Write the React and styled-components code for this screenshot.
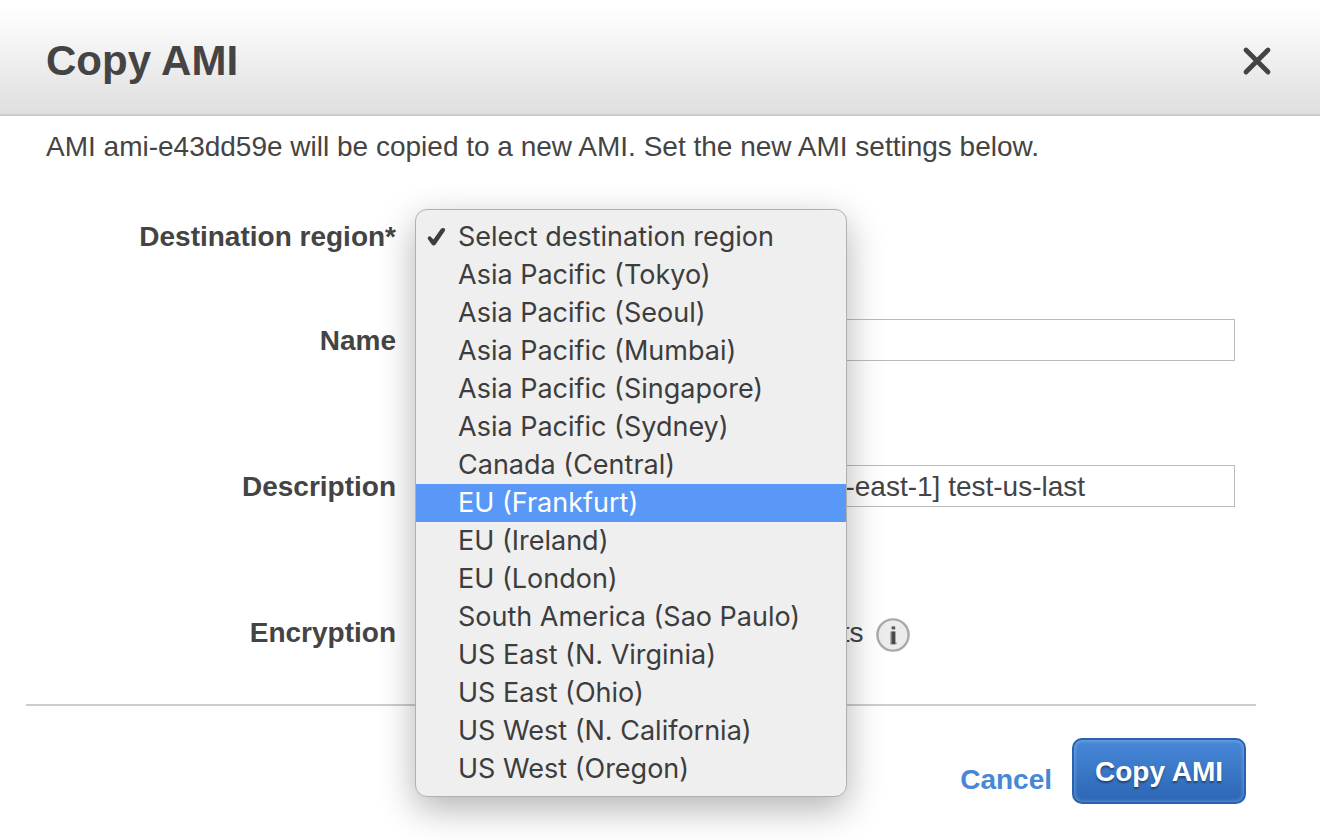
import React, { useState } from "react";
import styled, { createGlobalStyle } from "styled-components";

const GlobalStyle = createGlobalStyle`
  *, *::before, *::after { box-sizing: border-box; }
  body {
    margin: 0;
    background: #fff;
    color: #444;
    font: 28px/32px "Liberation Sans", Arial, sans-serif;
  }
`;

const Dialog = styled.main`
  min-height: 100vh;
`;

const Header = styled.header`
  display: flex;
  align-items: center;
  justify-content: space-between;
  height: 116px;
  padding: 8px 46px 0;
  border-bottom: 2px solid #ccc;
  background: linear-gradient(#fff, #fff 6%, #dfdfdf);
`;

const Title = styled.h1`
  margin: 0;
  font-size: 42px;
  line-height: 48px;
  font-weight: bold;
`;

const CloseButton = styled.button`
  display: flex;
  padding: 0;
  border: 0;
  background: none;
  color: #444;
  cursor: pointer;
`;

const Intro = styled.p`
  margin: 0;
  padding: 15px 46px 0;
`;

const Form = styled.form`
  padding-top: 52px;
`;

const Row = styled.div`
  display: flex;
  align-items: center;
  gap: 20px;
  height: 42px;
  margin-bottom: ${(p) => p.$space}px;
  padding: 0 85px 0 46px;
`;

const Label = styled.label`
  flex: none;
  width: 350px;
  padding-top: 2px;
  text-align: right;
  font-weight: bold;
`;

const Field = styled.div`
  position: relative;
  display: flex;
  flex: 1;
  align-items: center;
  min-width: 0;
`;

const RegionSelect = styled.select`
  width: 400px;
  height: 36px;
  font: inherit;
  color: inherit;
`;

const TextInput = styled.input`
  width: 100%;
  height: 42px;
  padding: 2px 44px 0;
  border: 1px solid #bbb;
  background: #fff;
  color: inherit;
  font: inherit;
`;

const CheckLabel = styled.label`
  display: flex;
  align-items: center;
  gap: 48px;
  margin-right: 12px;
  padding-top: 2px;
  white-space: nowrap;
`;

const CheckBox = styled.input`
  width: 26px;
  height: 26px;
  margin: 0;
`;

const InfoButton = styled.button`
  display: flex;
  padding: 6px 0 0;
  border: 0;
  background: none;
`;

const Menu = styled.ul`
  position: absolute;
  z-index: 1;
  top: -9px;
  left: -1px;
  width: 432px;
  margin: 0;
  padding: 8px 0;
  list-style: none;
  border: 1px solid #b0b0b0;
  border-radius: 12px;
  background: #efefef;
  box-shadow: 0 12px 36px rgba(0, 0, 0, 0.3);
  color: #3d3d3d;
  font-family: Inter, sans-serif;
  font-size: 27px;
`;

const Option = styled.li`
  display: flex;
  align-items: center;
  height: 38px;
  padding-left: 10px;
  white-space: nowrap;
  background: ${(p) => (p.$active ? "#5a98f8" : "transparent")};
  color: ${(p) => (p.$active ? "#fff" : "inherit")};
  cursor: default;
`;

const CheckSlot = styled.span`
  display: flex;
  flex: none;
  width: 32px;
`;

const Footer = styled.footer`
  display: flex;
  justify-content: flex-end;
  align-items: flex-end;
  gap: 20px;
  margin: 0 64px 0 26px;
  padding: 32px 10px 36px;
  border-top: 2px solid #ccc;
`;

const Cancel = styled.a`
  color: #4787d6;
  font-weight: bold;
  line-height: 48px;
  text-decoration: none;
`;

const Submit = styled.button`
  height: 66px;
  min-width: 174px;
  padding: 2px 20px 0;
  border: 2px solid #2763b0;
  border-radius: 10px;
  background: linear-gradient(#4888d8, #2c66b6);
  box-shadow: inset 0 0 4px rgba(255, 255, 255, 0.4);
  color: #fff;
  font: inherit;
  font-weight: bold;
  text-shadow: 0 2px 2px rgba(0, 0, 0, 0.4);
  cursor: pointer;
`;

const regions = [
  "Select destination region",
  "Asia Pacific (Tokyo)",
  "Asia Pacific (Seoul)",
  "Asia Pacific (Mumbai)",
  "Asia Pacific (Singapore)",
  "Asia Pacific (Sydney)",
  "Canada (Central)",
  "EU (Frankfurt)",
  "EU (Ireland)",
  "EU (London)",
  "South America (Sao Paulo)",
  "US East (N. Virginia)",
  "US East (Ohio)",
  "US West (N. California)",
  "US West (Oregon)",
];

const CloseIcon = () => (
  <svg width="34" height="34" viewBox="0 0 34 34" aria-hidden="true">
    <path d="M6 6 28 28M28 6 6 28" stroke="currentColor" strokeWidth="4.8" strokeLinecap="round" fill="none" />
  </svg>
);

const CheckIcon = () => (
  <svg width="22" height="22" viewBox="0 0 22 22" aria-hidden="true">
    <path d="M2 11.2Q3 9.6 4.8 10.8L7.4 13.6 15 2.8Q17 1 19 2.8 19.4 4 18.6 5.2L9.6 18.4Q7.6 20.4 5.8 18.6L2 13.2Q1.4 12.2 2 11.2Z" fill="currentColor" />
  </svg>
);

const InfoIcon = () => (
  <svg width="34" height="34" viewBox="0 0 34 34" aria-hidden="true">
    <circle cx="17" cy="17" r="15.6" fill="#ececec" stroke="#aaa" strokeWidth="2.4" />
    <rect x="15.6" y="8.4" width="3.6" height="3" fill="#555" />
    <path d="M14 13.6H15.6V25.6H14Z M19.2 24H20.8V26.4H14V24Z" fill="#b4b4b4" />
    <rect x="15.4" y="13.4" width="4" height="12.8" fill="#4a4a4a" />
  </svg>
);

export default function App() {
  const [region, setRegion] = useState(regions[0]);
  const [active, setActive] = useState(7);

  return (
    <>
      <GlobalStyle />
      <Dialog>
        <Header>
          <Title>Copy AMI</Title>
          <CloseButton type="button" aria-label="Close">
            <CloseIcon />
          </CloseButton>
        </Header>
        <Intro>AMI ami-e43dd59e will be copied to a new AMI. Set the new AMI settings below.</Intro>
        <Form onSubmit={(e) => e.preventDefault()}>
          <Row $space={62}>
            <Label htmlFor="region">Destination region*</Label>
            <Field>
              <RegionSelect id="region" value={region} onChange={(e) => setRegion(e.target.value)}>
                {regions.map((r) => (
                  <option key={r}>{r}</option>
                ))}
              </RegionSelect>
              <Menu role="listbox" aria-label="Destination region">
                {regions.map((r, i) => (
                  <Option
                    key={r}
                    role="option"
                    aria-selected={r === region}
                    $active={i === active}
                    onMouseEnter={() => setActive(i)}
                    onClick={() => setRegion(r)}
                  >
                    <CheckSlot>{r === region && <CheckIcon />}</CheckSlot>
                    {r}
                  </Option>
                ))}
              </Menu>
            </Field>
          </Row>
          <Row $space={104}>
            <Label htmlFor="name">Name</Label>
            <Field>
              <TextInput id="name" type="text" />
            </Field>
          </Row>
          <Row $space={104}>
            <Label htmlFor="description">Description</Label>
            <Field>
              <TextInput
                id="description"
                type="text"
                defaultValue="[Copied ami-e43dd59e from us-east-1] test-us-last"
              />
            </Field>
          </Row>
          <Row $space={51}>
            <Label htmlFor="encryption">Encryption</Label>
            <Field>
              <CheckLabel>
                <CheckBox id="encryption" type="checkbox" />
                Encrypt target EBS snapshots
              </CheckLabel>
              <InfoButton type="button" aria-label="About encryption">
                <InfoIcon />
              </InfoButton>
            </Field>
          </Row>
          <Footer>
            <Cancel href="#cancel">Cancel</Cancel>
            <Submit type="submit">Copy AMI</Submit>
          </Footer>
        </Form>
      </Dialog>
    </>
  );
}
